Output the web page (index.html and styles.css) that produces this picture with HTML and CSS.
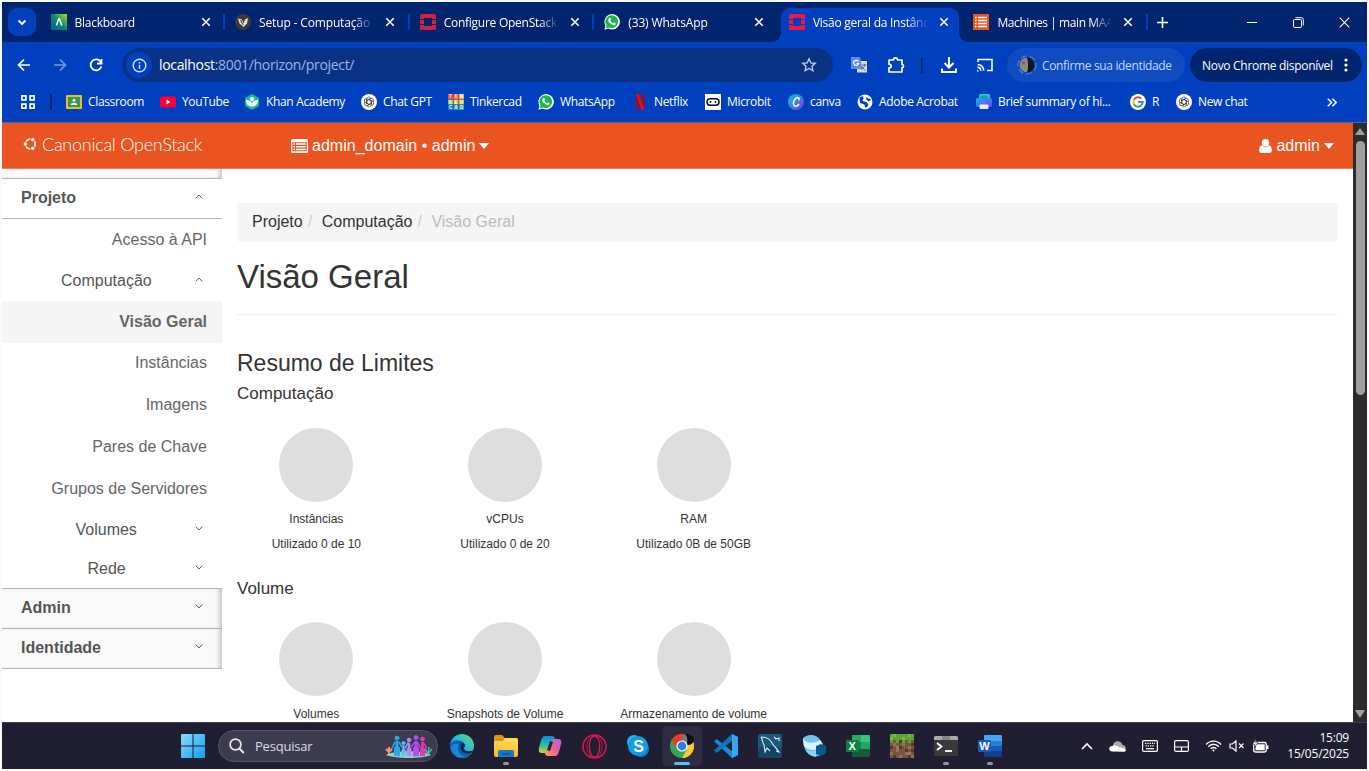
FILE: index.html
```html
<!DOCTYPE html>
<html lang="pt-BR">
<head>
<meta charset="utf-8">
<title>Visão geral da Instância</title>
<link rel="stylesheet" href="styles.css">
</head>
<body>
<svg width="0" height="0" class="defs">
  <defs>
    <symbol id="close" viewBox="0 0 10 10"><path d="M1.300 1.300l7.400 7.400M8.700 1.300L1.300 8.700" stroke="#fff" stroke-width="1.600" fill="none"/></symbol>
    <symbol id="openstack" viewBox="0 0 16 16"><path d="M1.500 0h13A1.500 1.500 0 0 1 16 1.500V5h-4V4H4v1H0V1.500A1.500 1.500 0 0 1 1.500 0zM0 6h4v4H0zM12 6h4v4h-4zM0 11h4v1h8v-1h4v3.500a1.500 1.500 0 0 1-1.500 1.500h-13A1.500 1.500 0 0 1 0 14.500z" fill="currentColor"/></symbol>
    <symbol id="whatsapp" viewBox="0 0 16 16"><path d="M.4 15.700l1.100-4A7.700 7.700 0 1 1 4.500 14.600z" fill="#fff"/><path d="M1.800 14.200l.8-2.800A6.400 6.400 0 1 1 5 13.400z" fill="#19b84a"/><path d="M5.200 4.200c.5-.5 1-.4 1.200.1l.5 1.200c.1.400-.1.600-.6 1.100.6 1.200 1.500 2 2.700 2.600.6-.7.700-.9 1.100-.7l1.300.6c.5.300.3 1.100-.2 1.600-1 .9-2.500.5-4.200-.6C5.300 9 4.200 7.200 4.300 5.900c0-.8.500-1.400.9-1.700z" fill="#fff"/></symbol>
    <symbol id="gpt" viewBox="0 0 16 16"><circle cx="8" cy="8" r="8" fill="#fff"/><g fill="none" stroke="#333" stroke-width=".7"><path id="petal" d="M5.700 9.300V5.100A2.300 2.300 0 0 1 10 4.200M5.700 6.800L9.300 4.700"/><use href="#petal" transform="rotate(60 8 8)"/><use href="#petal" transform="rotate(120 8 8)"/><use href="#petal" transform="rotate(180 8 8)"/><use href="#petal" transform="rotate(240 8 8)"/><use href="#petal" transform="rotate(300 8 8)"/></g></symbol>
    <symbol id="up" viewBox="0 0 8 5"><path d="M.7 4.300L4 1.100l3.300 3.200" fill="none" stroke="#555" stroke-width="1"/></symbol>
    <symbol id="down" viewBox="0 0 8 5"><path d="M.7.7L4 3.900 7.300.7" fill="none" stroke="#555" stroke-width="1"/></symbol>
    <linearGradient id="gBb" x1="0" y1="1" x2="1" y2="0"><stop offset="0" stop-color="#075aa3"/><stop offset=".5" stop-color="#078b70"/><stop offset="1" stop-color="#b7dc20"/></linearGradient>
    <linearGradient id="gCanva" x1="0" y1="0" x2="1" y2="1"><stop offset="0" stop-color="#08c5ce"/><stop offset=".5" stop-color="#3c83df"/><stop offset="1" stop-color="#842de6"/></linearGradient>
    <linearGradient id="gBrief" x1="0" y1="0" x2="1" y2="1"><stop offset="0" stop-color="#19b2dc"/><stop offset="1" stop-color="#7143ef"/></linearGradient>
    <linearGradient id="gWin" gradientUnits="userSpaceOnUse" x1="0" y1="0" x2="24" y2="24"><stop offset="0" stop-color="#82defd"/><stop offset="1" stop-color="#159cf0"/></linearGradient>
    <linearGradient id="gEdge" x1="0" y1="1" x2="1" y2="0"><stop offset="0" stop-color="#0962bc"/><stop offset=".55" stop-color="#28b7df"/><stop offset="1" stop-color="#63df58"/></linearGradient>
    <linearGradient id="gCoA" x1="0" y1="0" x2="0" y2="1"><stop offset="0" stop-color="#1684ee"/><stop offset=".55" stop-color="#28c39b"/><stop offset="1" stop-color="#f2c52a"/></linearGradient>
    <linearGradient id="gCoB" x1="1" y1="0" x2="0" y2="1"><stop offset="0" stop-color="#a867ee"/><stop offset=".5" stop-color="#f35d94"/><stop offset="1" stop-color="#ffac49"/></linearGradient>
    <linearGradient id="gFolder" x1="0" y1="0" x2="0" y2="1"><stop offset="0" stop-color="#ffdc5d"/><stop offset="1" stop-color="#f8b929"/></linearGradient>
  </defs>
</svg>

<div class="screen">
  <div class="tabstrip">
    <div class="tabsearch"><svg width="10" height="7" viewBox="0 0 10 7"><path d="M1.500 1.500L5 5l3.500-3.500" fill="none" stroke="#fff" stroke-width="1.900"/></svg></div>
    <div class="tabs">
      <div class="tab">
        <svg class="fav" viewBox="0 0 16 16"><rect width="16" height="16" fill="url(#gBb)"/><path d="M5.500 11.500L7.600 5h1L10.700 11.500" fill="none" stroke="#fff" stroke-width="1.600"/></svg>
        <span class="title">Blackboard</span><svg class="x"><use href="#close"/></svg>
      </div>
      <div class="tab">
        <svg class="fav" viewBox="0 0 16 16"><circle cx="8" cy="8" r="8" fill="#3a3a3a"/><path d="M3 4.500l4 1 1.500 4L10 5.500l3-1.500-1 5.500-3.500 3.500-4-3.500z" fill="#ddd"/><path d="M5.500 6l2.700 5" fill="none" stroke="#333" stroke-width="1"/></svg>
        <span class="title wide">Setup - Computação e</span><svg class="x"><use href="#close"/></svg>
      </div>
      <div class="tab">
        <svg class="fav os-dark"><use href="#openstack"/></svg>
        <span class="title">Configure OpenStack</span><svg class="x"><use href="#close"/></svg>
      </div>
      <div class="tab nosep">
        <svg class="fav"><use href="#whatsapp"/></svg>
        <span class="title wide">(33) WhatsApp</span><svg class="x"><use href="#close"/></svg>
      </div>
      <div class="tab active">
        <svg class="fav os-light"><use href="#openstack"/></svg>
        <span class="title">Visão geral da Instânc</span><svg class="x"><use href="#close"/></svg>
      </div>
      <div class="tab">
        <svg class="fav" viewBox="0 0 16 16"><rect width="16" height="16" fill="#e95420"/><path d="M2 3.500h1.500M5 3.500h9M2 6.500h1.500M5 6.500h9M2 9.500h1.500M5 9.500h9M2 12.500h1.500M5 12.500h9" stroke="#fff" stroke-width="1.300"/></svg>
        <span class="title maas">Machines | main MAA</span><svg class="x"><use href="#close"/></svg>
      </div>
    </div>
    <svg class="newtab" width="11" height="11" viewBox="0 0 11 11"><path d="M5.500 0v11M0 5.500h11" stroke="#fff" stroke-width="1.600"/></svg>
    <div class="winctl">
      <svg width="11" height="11" viewBox="0 0 11 11"><path d="M0 5.500h10" stroke="#fff"/></svg>
      <svg width="11" height="11" viewBox="0 0 11 11" fill="none" stroke="#fff"><rect x=".5" y="2.500" width="8" height="8" rx="1.300"/><path d="M2.500.7H8.300a2 2 0 0 1 2 2V8.500"/></svg>
      <svg width="11" height="11" viewBox="0 0 11 11"><path d="M.7.7l9.600 9.600M10.300.7L.7 10.300" stroke="#fff" stroke-width="1.100"/></svg>
    </div>
  </div>

  <div class="toolbar">
    <svg class="nav" viewBox="0 0 16 16"><path d="M14 8H3M8 2.500L2.500 8 8 13.500" fill="none" stroke="#fff" stroke-width="1.700"/></svg>
    <svg class="nav dim" viewBox="0 0 16 16"><path d="M2 8h11M8 2.500L13.500 8 8 13.500" fill="none" stroke="#fff" stroke-width="1.700"/></svg>
    <svg class="nav" viewBox="0 0 16 16"><path d="M13 5.300A5.500 5.500 0 1 0 13.400 9.500M13.500 2v4.500H9" fill="none" stroke="#fff" stroke-width="1.800"/></svg>
    <div class="omnibox">
      <span class="info"><svg width="15" height="15" viewBox="0 0 15 15"><circle cx="7.500" cy="7.500" r="6.300" fill="none" stroke="#d5e3ff" stroke-width="1.400"/><path d="M7.500 6.700v4M7.500 4v1.500" stroke="#d5e3ff" stroke-width="1.500"/></svg></span>
      <span class="url"><b>localhost</b>:8001/horizon/project/</span>
      <svg class="star" width="16" height="16" viewBox="0 0 16 16"><path d="M8 1.800l1.800 4.100 4.500.4-3.400 3 1 4.400L8 11.400l-3.900 2.300 1-4.400-3.400-3 4.500-.4z" fill="none" stroke="#c6d2ea" stroke-width="1.300"/></svg>
    </div>
    <svg class="ext" viewBox="0 0 16 16"><rect x="6" y="4" width="10" height="11.500" fill="#d8dee9"/><path d="M0 0h9l2.500 12H0z" fill="#5b8df0"/><path d="M7.300 4.600A2.500 2.500 0 1 0 7.500 6.500H5.500" fill="none" stroke="#fff" stroke-width="1.200"/><path d="M11 8h4.500M13.500 7v1c0 2-1.500 4-3 4.500M11 9.500c.7 2 2 3 3.500 4" fill="none" stroke="#59667c" stroke-width="1"/></svg>
    <svg class="puzzle" width="18" height="18" viewBox="0 0 18 18"><path d="M2 4h4.500c0-2.900 4-2.900 4 0H15v4.300c2 0 2 3.400 0 3.400V16H2v-4.200c3 0 3-3.600 0-3.600z" fill="none" stroke="#fff" stroke-width="1.700" stroke-linejoin="round"/></svg>
    <i class="divider"></i>
    <svg class="dl" width="18" height="18" viewBox="0 0 18 18"><path d="M9 1v10M4.500 7L9 11.500 13.500 7M2 12.500V16h14v-3.500" fill="none" stroke="#fff" stroke-width="2"/></svg>
    <svg class="cast" width="18" height="16" viewBox="0 0 18 16"><path d="M2 5V2.500h14V13.500h-5M1.500 7.500c4 .2 6 2.200 6.200 6.200M1.500 10.300c2 .1 3.200 1.300 3.400 3.400" fill="none" stroke="#fff" stroke-width="1.500"/><path d="M1 12.500l2 2H1z" fill="#fff"/></svg>
    <div class="profile"><svg width="20" height="20" viewBox="0 0 20 20"><circle cx="10" cy="10" r="9" fill="none" stroke="#4b80e6" stroke-width="1.200" stroke-dasharray="6 3"/><circle cx="10" cy="10" r="7.500" fill="#151515"/><path d="M10 2.500a7.500 7.500 0 0 0 0 15c1.500-4.500 1.500-10 0-15z" fill="#888"/><circle cx="6.500" cy="8" r="1.500" fill="#666"/></svg><span>Confirme sua identidade</span></div>
    <div class="update"><span>Novo Chrome disponível</span><svg width="4" height="14" viewBox="0 0 4 14"><circle cx="2" cy="2" r="1.600" fill="#fff"/><circle cx="2" cy="7" r="1.600" fill="#fff"/><circle cx="2" cy="12" r="1.600" fill="#fff"/></svg></div>
  </div>

  <div class="bookmarks">
    <div class="apps"><svg width="14" height="14" viewBox="0 0 14 14" fill="none" stroke="#fff" stroke-width="1.700"><rect x=".9" y=".9" width="4" height="4"/><rect x="9.100" y=".9" width="4" height="4"/><rect x=".9" y="9.100" width="4" height="4"/><rect x="9.100" y="9.100" width="4" height="4"/></svg><i class="divider"></i></div>
    <div class="bm"><svg viewBox="0 0 16 16"><rect y="1" width="16" height="14" rx="1" fill="#f4b92b"/><rect x="2" y="3" width="12" height="10" fill="#2f9a50"/><circle cx="8" cy="6.300" r="1.500" fill="#fff"/><path d="M4.700 11c0-3 6.600-3 6.600 0z" fill="#fff"/></svg><span>Classroom</span></div>
    <div class="bm"><svg viewBox="0 0 16 16"><rect y="2.500" width="16" height="11" rx="2.500" fill="#f03"/><path d="M6.500 5.500l4 2.500-4 2.500z" fill="#fff"/></svg><span>YouTube</span></div>
    <div class="bm"><svg viewBox="0 0 16 16"><path d="M8 0l7 4v8l-7 4-7-4V4z" fill="#14bf96"/><circle cx="8" cy="5" r="2" fill="#fff"/><path d="M2 6c4 0 6 2 6 4 0-2 2-4 6-4 0 4-2 6.500-6 6.500S2 10 2 6z" fill="#fff"/></svg><span>Khan Academy</span></div>
    <div class="bm"><svg><use href="#gpt"/></svg><span>Chat GPT</span></div>
    <div class="bm"><svg viewBox="0 0 16 16"><path fill="#ef4e3e" d="M0 0h5v5H0z"/><path fill="#f47a3c" d="M5.500 0h5v5h-5z"/><path fill="#f7a43c" d="M11 0h5v5h-5z"/><path fill="#86c440" d="M0 5.500h5v5H0z"/><path fill="#e9b22a" d="M5.500 5.500h5v5h-5z"/><path fill="#c6ba36" d="M11 5.500h5v5h-5z"/><path fill="#2276c9" d="M0 11h5v5H0z"/><path fill="#24a1cc" d="M5.500 11h5v5h-5z"/><path fill="#299ba6" d="M11 11h5v5h-5z"/><g fill="#fff" font-family="Liberation Sans" font-size="4.500" font-weight="700"><text x="1" y="4.200">T</text><text x="7.300" y="4.200">I</text><text x="11.900" y="4.200">N</text><text x="1" y="9.700">K</text><text x="6.400" y="9.700">E</text><text x="11.900" y="9.700">R</text><text x="1" y="15.200">C</text><text x="6.400" y="15.200">A</text><text x="11.900" y="15.200">D</text></g></svg><span>Tinkercad</span></div>
    <div class="bm"><svg><use href="#whatsapp"/></svg><span>WhatsApp</span></div>
    <div class="bm"><svg viewBox="0 0 16 16"><path d="M4 0h2.700v16L4 15.700zM9.700 0h2.600v16l-2.600-.3z" fill="#b20710"/><path d="M4 0h2.700l5.600 16H9.700z" fill="#f00b16"/></svg><span>Netflix</span></div>
    <div class="bm"><svg viewBox="0 0 16 16"><rect width="16" height="16" fill="#fff"/><rect x="2" y="4.800" width="12" height="6.400" rx="3.200" fill="none" stroke="#111" stroke-width="1.500"/><circle cx="5.500" cy="8" r=".9"/><circle cx="10.500" cy="8" r=".9"/></svg><span>Microbit</span></div>
    <div class="bm"><svg viewBox="0 0 16 16"><circle cx="8" cy="8" r="8" fill="url(#gCanva)"/><path d="M10.500 6.300c1.600-2.200-.2-3.600-2.400-2.200-2.600 1.600-3.500 6.200-1.900 7.700 1.300 1.200 3.600.1 4.800-1.800" fill="none" stroke="#fff" stroke-width="1.500"/></svg><span>canva</span></div>
    <div class="bm"><svg viewBox="0 0 16 16"><circle cx="8" cy="8" r="7.500" fill="#fff"/><path d="M2.500 3.500L6 2l.5 2.500-1 2.500 4 1 2 2.500-1.500 2.500-2 .5-.5-3-4.500-1.500z" fill="#0040be"/><path d="M9 3l2.500 1.500 3 1-3 2-2-2z" fill="#0040be"/></svg><span>Adobe Acrobat</span></div>
    <div class="bm"><svg viewBox="0 0 16 16"><rect x="3" width="11" height="5" rx="1.500" fill="#23cbd8"/><rect y="4" width="16" height="9" rx="2" fill="url(#gBrief)"/><rect x="4" y="1.500" width="8" height="3.500" rx="1" fill="#179fc0"/><rect x="3.500" y="10.500" width="9" height="4.500" rx="1" fill="#efe8ff"/></svg><span>Brief summary of hi...</span></div>
    <div class="bm"><svg viewBox="0 0 16 16"><circle cx="8" cy="8" r="8" fill="#fff"/><g fill="none" stroke-width="2"><path d="M11.300 4.600A4.700 4.700 0 0 0 3.900 5.700" stroke="#ea4335"/><path d="M3.900 5.700a4.700 4.700 0 0 0 0 4.600" stroke="#fbbc05"/><path d="M3.900 10.300A4.700 4.700 0 0 0 11 11.600" stroke="#34a853"/><path d="M11 11.600A4.700 4.700 0 0 0 12.700 8H8" stroke="#4285f4"/></g></svg><span>R</span></div>
    <div class="bm"><svg><use href="#gpt"/></svg><span>New chat</span></div>
    <svg class="more" width="10" height="9" viewBox="0 0 10 9"><path d="M.8.7l3.800 3.800L.8 8.300M5.300.7l3.800 3.800-3.800 3.800" fill="none" stroke="#fff" stroke-width="1.500"/></svg>
  </div>

  <div class="viewport">
    <div class="page">
      <header class="topbar">
        <div class="brand"><svg width="14" height="14" viewBox="0 0 14 14"><circle cx="7.300" cy="7" r="4.900" fill="none" stroke="#fff" stroke-width="1.800"/><g fill="#fff" stroke="#e95420" stroke-width="1"><circle cx="2.300" cy="7" r="2.200"/><circle cx="9.800" cy="2.700" r="2.200"/><circle cx="9.800" cy="11.300" r="2.200"/></g></svg><span>Canonical OpenStack</span></div>
        <div class="context"><svg width="17" height="14" viewBox="0 0 17 14"><path d="M1.500 0h14A1.500 1.500 0 0 1 17 1.500v11a1.500 1.500 0 0 1-1.500 1.500h-14A1.500 1.500 0 0 1 0 12.500v-11A1.500 1.500 0 0 1 1.500 0zM1.300 3.300v9h14.400v-9z" fill="#fff" fill-rule="evenodd"/><path d="M2.500 5h1.500M5 5h9.500M2.500 7.700h1.500M5 7.700h9.500M2.500 10.400h1.500M5 10.400h9.500" stroke="#fff" stroke-width="1.500"/></svg><span>admin_domain • admin</span><i class="caret"></i></div>
        <div class="user"><svg width="13" height="14" viewBox="0 0 13 14"><circle cx="6.500" cy="3.700" r="3.700" fill="#fff"/><path d="M3 6.300c2 2.200 5 2.200 7 0 2 .4 2.800 2.300 2.800 5.200A2.300 2.300 0 0 1 10.500 14h-8A2.300 2.300 0 0 1 .2 11.500C.2 8.600 1 6.700 3 6.300z" fill="#fff"/></svg><span>admin</span><i class="caret"></i></div>
      </header>
      <div class="body">
        <nav class="sidebar">
          <div class="stub"></div>
          <div class="group open"><span>Projeto</span><svg class="chev"><use href="#up"/></svg></div>
          <div class="item h41">Acesso à API</div>
          <div class="sub h41"><span class="comp">Computação</span><svg class="chev"><use href="#up"/></svg></div>
          <div class="item selected">Visão Geral</div>
          <div class="item h41 inst">Instâncias</div>
          <div class="item">Imagens</div>
          <div class="item">Pares de Chave</div>
          <div class="item">Grupos de Servidores</div>
          <div class="sub h39"><span class="vol">Volumes</span><svg class="chev"><use href="#down"/></svg></div>
          <div class="sub h39"><span class="rede">Rede</span><svg class="chev"><use href="#down"/></svg></div>
          <div class="group"><span>Admin</span><svg class="chev"><use href="#down"/></svg></div>
          <div class="group last"><span>Identidade</span><svg class="chev"><use href="#down"/></svg></div>
        </nav>
        <main class="content">
          <div class="crumbs"><span>Projeto</span><i>/</i><span>Computação</span><i>/</i><em>Visão Geral</em></div>
          <h1>Visão Geral</h1>
          <h2>Resumo de Limites</h2>
          <h3>Computação</h3>
          <div class="quotas">
            <div class="quota"><div class="pie"></div><p>Instâncias</p><p>Utilizado 0 de 10</p></div>
            <div class="quota"><div class="pie"></div><p>vCPUs</p><p>Utilizado 0 de 20</p></div>
            <div class="quota"><div class="pie"></div><p>RAM</p><p>Utilizado 0B de 50GB</p></div>
          </div>
          <h3>Volume</h3>
          <div class="quotas volume">
            <div class="quota"><div class="pie"></div><p>Volumes</p></div>
            <div class="quota"><div class="pie"></div><p>Snapshots de Volume</p></div>
            <div class="quota"><div class="pie"></div><p>Armazenamento de volume</p></div>
          </div>
        </main>
      </div>
    </div>
    <div class="scrollbar">
      <svg width="10" height="7" viewBox="0 0 10 7"><path d="M5 0l4.500 6a.6.600 0 0 1-.5 1H1a.6.600 0 0 1-.5-1z" fill="#9f9f9f"/></svg>
      <div class="thumb"></div>
      <svg class="sdown" width="10" height="8" viewBox="0 0 10 8"><path d="M5 8L.5 1A.6.600 0 0 1 1 0h8a.6.600 0 0 1 .5 1z" fill="#9f9f9f"/></svg>
    </div>
  </div>

  <div class="taskbar">
    <div class="task win"><svg width="24" height="24" viewBox="0 0 24 24" fill="url(#gWin)"><path d="M1 0h10.500v11.500H0V1a1 1 0 0 1 1-1zM12.500 0H23a1 1 0 0 1 1 1v10.500H12.500zM0 12.500h11.500V24H1a1 1 0 0 1-1-1zM12.500 12.500H24V23a1 1 0 0 1-1 1H12.500z"/></svg></div>
    <div class="search"><svg width="16" height="16" viewBox="0 0 16 16"><circle cx="6.500" cy="6.500" r="5.400" fill="none" stroke="#e8e8ee" stroke-width="1.700"/><path d="M10.500 10.500l4.300 4.500" stroke="#e8e8ee" stroke-width="1.900"/></svg><span>Pesquisar</span>
      <svg class="people" width="48" height="24" viewBox="0 0 48 24"><path d="M1 21c8-5 38-5 45 0-8 4-36 4-45 0z" fill="#8fd6be"/><g stroke-linecap="round"><g fill="#2ba6ed" stroke="#2ba6ed"><circle cx="12" cy="4" r="2"/><path d="M12 8v6M10.500 14v7M13.500 14v7" stroke-width="3"/><path d="M10 8l-3 6M14 8l3 5" stroke-width="1.600"/></g><g fill="#53c4f4" stroke="#53c4f4"><circle cx="18.500" cy="9" r="1.500"/><path d="M18.500 12v4M17.500 16v5M19.500 16v5" stroke-width="2"/></g><g fill="#aa8cf5" stroke="#aa8cf5"><circle cx="24" cy="6" r="1.800"/><path d="M24 10v5M22.800 15v6M25.200 15v6" stroke-width="2.500"/><path d="M23 9l-3 5" stroke-width="1.500"/></g><g fill="#b44cef" stroke="#b44cef"><circle cx="31" cy="3.500" r="2"/><path d="M31 8v6M29.500 14v7M32.500 14v7" stroke-width="3"/><path d="M30 8l-4 5M32 8l3 5" stroke-width="1.500"/></g><g fill="#e337ae" stroke="#e337ae"><circle cx="37.500" cy="5" r="1.900"/><path d="M37.500 9v6M36.200 15v6M38.800 15v6" stroke-width="2.700"/><path d="M38.500 9l3 5" stroke-width="1.500"/></g></g><path d="M4 20v-7M4 18l-3-3M4 18l3-3" stroke="#f0936b" stroke-width="2.200"/><path d="M43 21l1-8M43 20l4-5M43 20l-3-5" stroke="#4eb79f" stroke-width="1.500"/></svg>
    </div>
    <div class="task edge"><svg width="24" height="24" viewBox="0 0 24 24"><circle cx="12" cy="12" r="12" fill="url(#gEdge)"/><path d="M0 12C1 5 13 5 15 11c.3 1.400-.8 2.500-1.500 3.500C15 18 20 18 23 16.500 20 23 12 26 6 22.500 2 20 0 16 0 12z" fill="#0c5caf"/><path d="M9 11c-3 4 0 10 7 12-8 3-15-3-15-10 2-4 6-4 8-2z" fill="#1688d6"/><path d="M11.500 9.500c4-1 4 3 2 5 2 3.500 7 3 9.500 2l-1 2c-7 3-14-2-10.500-9z" fill="#1b2034"/></svg></div>
    <div class="task run"><svg width="24" height="22" viewBox="0 0 24 22"><path d="M0 2a2 2 0 0 1 2-2h6l3 3h11a2 2 0 0 1 2 2v4H0z" fill="#dc9514"/><path d="M0 6h9l2-3h11a2 2 0 0 1 2 2v15a2 2 0 0 1-2 2H2a2 2 0 0 1-2-2z" fill="url(#gFolder)"/><path d="M4 22v-5a2 2 0 0 1 2-2h12a2 2 0 0 1 2 2v5z" fill="#147ac7"/><path d="M8 19h8" stroke="#0b559b" stroke-width="1.500"/></svg></div>
    <div class="task"><svg width="24" height="24" viewBox="0 0 24 24"><path d="M6 2h8c2 0 2.500 1 3 3l1 2c-5-1-5 4-6 8-1 3-3 4-5 4H4c-5 0-3-5-2-9S4 3 6 2z" fill="url(#gCoA)"/><path d="M18 22h-8c-2 0-3-1-3-3l-1-2c5 1 5-4 6-8 1-3 3-4 5-4h3c5 0 3 5 2 9s-2 7-4 8z" fill="url(#gCoB)"/><path d="M12 7l3 1-3 9-3-1z" fill="#25233d"/></svg></div>
    <div class="task"><svg width="25" height="25" viewBox="0 0 25 25" fill="none" stroke="#d91851"><circle cx="12.500" cy="12.500" r="11.500" stroke-width="1.500"/><ellipse cx="12.500" cy="12.500" rx="5.200" ry="10.500" stroke-width="1.300"/><ellipse cx="12.500" cy="12.500" rx="7.700" ry="11" stroke-width=".8"/></svg></div>
    <div class="task"><svg width="24" height="24" viewBox="0 0 24 24"><circle cx="8" cy="8" r="7" fill="#23b8f2"/><circle cx="15" cy="15" r="8" fill="#087bcd"/><circle cx="12" cy="12" r="10" fill="#109ee3"/><text x="7.200" y="18" font-family="Liberation Sans" font-size="16" font-weight="700" fill="#fff">S</text></svg></div>
    <div class="task current"><svg width="24" height="24" viewBox="0 0 24 24"><circle cx="12" cy="12" r="12" fill="#34a853"/><path d="M1.600 6A12 12 0 0 1 22.400 6H12L7 15z" fill="#e33b2e"/><path d="M22.400 6A12 12 0 0 1 12 24l5-9-5-9z" fill="#fcc934"/><path d="M14 0a7 7 0 0 0 2 11c3-3 2-8-2-11z" fill="#777"/><path d="M15 0c3 3 3 8 1 11 4 1 8-2 8-5.500S20 0 15 0z" fill="#111"/><circle cx="12" cy="12" r="5.600" fill="#fff"/><circle cx="12" cy="12" r="4.400" fill="#287de9"/></svg></div>
    <div class="task"><svg width="25" height="24" viewBox="0 0 25 24"><path d="M18 0l6 3v18l-6 3L2 9l-2-1.500L2.500 5 18 17z" fill="#168bd8"/><path d="M18 0l6 3v18l-6 3z" fill="#35a6ef"/><path d="M18 7v-7L0 16.500 2.500 19z" fill="#0b73bb"/><path d="M18 7v10l-6-5z" fill="#201f36"/></svg></div>
    <div class="task"><svg width="24" height="24" viewBox="0 0 24 24"><rect width="24" height="24" rx="2" fill="#1a587a"/><path d="M0 15c9-4 17-4 24 0v7a2 2 0 0 1-2 2H2a2 2 0 0 1-2-2z" fill="#164463"/><path d="M3 3c6 0 9 2 11 6 2 4 5 5 7 9l-3-1M3 3c2 3 1 5 3 8l1 7 2-4 3 3M16 3l2 2 3-1v3" fill="none" stroke="#d9edf5" stroke-width="1.100"/></svg></div>
    <div class="task"><svg width="24" height="24" viewBox="0 0 24 24"><path d="M1 4C6-1 15 1 19 7s3 12-2 15C9 24 0 17 1 4z" fill="#4eb9e9"/><path d="M1 4c3 6 12 5 17 2 2 2 3 5 3 7-8 4-15 4-19-1z" fill="#d9f3fb"/><path d="M2 4C7-1 15 1 18 6c-5 3-14 4-16-2z" fill="#6dc5ee"/><path d="M3 14c5 4 8 3 12 2l-1 7C8 22 4 19 3 14z" fill="#86d4f5"/><path d="M14 12l5-2 5 2v7l-5 3-5-2z" fill="#075b91"/></svg></div>
    <div class="task"><svg width="24" height="22" viewBox="0 0 24 22"><path fill="#2ba766" d="M6 0h9v7H6z"/><path fill="#36c681" d="M15 0h8a1 1 0 0 1 1 1v6h-9z"/><path fill="#18814c" d="M6 7h9v7H6z"/><path fill="#20a765" d="M15 7h9v7h-9z"/><path fill="#165c38" d="M6 14h18v7a1 1 0 0 1-1 1H7a1 1 0 0 1-1-1z"/><rect y="5" width="13" height="12" rx="1" fill="#107c41"/><text x="2.500" y="14.800" font-family="Liberation Sans" font-size="11" font-weight="700" fill="#fff">X</text></svg></div>
    <div class="task"><svg width="24" height="24" viewBox="0 0 8 8" shape-rendering="crispEdges"><path fill="#79553b" d="M0 0h8v8H0z"/><path fill="#5ba335" d="M0 0h8v2H7v1H6V2H5v1H4V2H3v1H2V2H1v1H0z"/><path fill="#76bb45" d="M1 0h1v1H1zM4 1h1v1H4zM6 0h1v1H6zM0 1h1v1H0z"/><path fill="#9a7352" d="M1 3h1v1H1zM4 3h1v1H4zM6 4h1v1H6zM2 5h1v1H2zM0 6h1v1H0zM5 6h1v1H5zM3 7h1v1H3zM7 7h1v1H7z"/><path fill="#52392a" d="M3 4h1v1H3zM0 4h1v1H0zM7 3h1v1H7zM5 5h1v1H5zM1 7h1v1H1zM6 7h1v1H6zM3 2h1v1H3zM7 5h1v1H7z"/><path fill="#8a8078" d="M2 4h1v1H2zM6 6h1v1H6z"/></svg></div>
    <div class="task run"><svg width="24" height="20" viewBox="0 0 24 20"><rect width="24" height="20" rx="1.500" fill="#393939"/><path d="M1.500 0h21A1.500 1.500 0 0 1 24 1.500V4H0V1.500A1.500 1.500 0 0 1 1.500 0z" fill="#aaa"/><path d="M8 0h8v4H8z" fill="#858585"/><path d="M3 7l4.500 3.500L3 14" fill="none" stroke="#fff" stroke-width="1.800"/><path d="M11 15h7" stroke="#fff" stroke-width="1.800"/></svg></div>
    <div class="task run"><svg width="24" height="22" viewBox="0 0 24 22"><path fill="#43a6ee" d="M6 1a1 1 0 0 1 1-1h16a1 1 0 0 1 1 1v5H6z"/><path fill="#2b7cd5" d="M6 6h18v5H6z"/><path fill="#175cb6" d="M6 11h18v5H6z"/><path fill="#123f89" d="M6 16h18v5a1 1 0 0 1-1 1H7a1 1 0 0 1-1-1z"/><rect y="5" width="13" height="12" rx="1" fill="#185abd"/><text x="1.200" y="14.800" font-family="Liberation Sans" font-size="11" font-weight="700" fill="#fff">W</text></svg></div>
    <div class="tray">
      <svg width="12" height="8" viewBox="0 0 12 8"><path d="M1 7l5-5 5 5" fill="none" stroke="#fff" stroke-width="1.700"/></svg>
      <svg width="17" height="11" viewBox="0 0 17 11"><path d="M4 5C4-.5 12-1.500 13.500 4 16 4 17 6 16.500 8L10 10 4 8z" fill="#aaa"/><path d="M3.500 10.500C-1 10.500-.7 5 3.300 5c2-1 3-1 5 .3l5 1.700c5 0 4 4 1.200 3.800z" fill="#fff"/></svg>
      <svg width="16" height="12" viewBox="0 0 16 12" fill="none" stroke="#fff"><rect x=".6" y=".6" width="14.800" height="10.800" rx="1.200" stroke-width="1.200"/><path d="M3 3.300h10M3.500 5.800h9" stroke-dasharray="1.300 1" stroke-width="1.200"/><path d="M4 8.700h8" stroke-width="1.200"/></svg>
      <svg width="15" height="12" viewBox="0 0 15 12" fill="none" stroke="#fff" stroke-width="1.200"><rect x=".6" y=".6" width="13.800" height="10.800" rx="1.500"/><path d="M.6 7h13.800M7.500 7v4.500"/></svg>
      <svg class="wifi" width="17" height="12" viewBox="0 0 17 12" fill="none" stroke="#fff" stroke-width="1.400"><path d="M1 4.500c4-4.500 11-4.500 15 0M3.300 6.700c3-3.200 7.400-3.200 10.400 0M5.600 8.800c1.700-1.800 4.100-1.800 5.800 0"/><circle cx="8.500" cy="10.500" r="1" fill="#fff" stroke="none"/></svg>
      <svg class="vol-ic" width="16" height="12" viewBox="0 0 16 12" fill="none" stroke="#fff" stroke-width="1.200"><path d="M1 4h2.500L7 .9v10.200L3.500 8H1zM10 3.500l4.500 4.500M14.500 3.500L10 8"/></svg>
      <svg class="bat" width="17" height="14" viewBox="0 0 17 14"><rect x="1.700" y="3.500" width="12.600" height="9.500" rx="1.800" fill="none" stroke="#fff" stroke-width="1.300"/><path d="M4 5.300h8.700v5.900H3.300zM15 6.500h1.500v3.500H15z" fill="#fff"/><path d="M4 0L.5 5.500H3L2 9l4-5.500H3.500z" fill="#fff" stroke="#1f1e33" stroke-width=".5"/></svg>
      <div class="clock"><span>15:09</span><span>15/05/2025</span></div>
    </div>
  </div>
</div>
</body>
</html>
```

FILE: styles.css
```css
* { box-sizing: border-box; }
body { margin: 0; background: #fafafa; overflow: hidden; font-family: "Liberation Sans", Arial, sans-serif; }
svg { display: block; flex: none; }
.defs { position: absolute; }
.screen { width: 1365px; height: 767px; margin: 2px; display: flex; flex-direction: column; background: #fff; }
.tabstrip, .toolbar, .bookmarks, .taskbar { font-family: "Open Sans", "Noto Sans", sans-serif; font-size: 12px; color: #fff; white-space: nowrap; }

/* tab strip */
.tabstrip { height: 40px; flex: none; background: #00246d; display: flex; padding-top: 6px; }
.tabsearch { width: 28px; height: 28px; margin-left: 6px; border-radius: 9px; background: #0040be; display: flex; align-items: center; justify-content: center; }
.tabs { display: flex; gap: 6.600px; margin-left: 6.500px; }
.tab { position: relative; width: 178px; height: 34px; padding: 0 10px 6px 8px; display: flex; align-items: center; }
.tab::after { content: ""; position: absolute; right: -4.500px; top: 6px; width: 2px; height: 16px; background: #0040be; }
.tab.nosep::after, .tab.active::after { display: none; }
.tab.active { background: #0040be; border-radius: 9px 9px 0 0; }
.tab.active::before { content: ""; position: absolute; left: -9px; right: -9px; bottom: 0; height: 9px; background: radial-gradient(circle at 0 0, transparent 8.500px, #0040be 9px) left / 9px 9px no-repeat, radial-gradient(circle at 100% 0, transparent 8.500px, #0040be 9px) right / 9px 9px no-repeat; }
.fav { width: 16px; height: 16px; }
.os-dark { color: #cf2140; }
.os-light { color: #ed1944; }
.title { width: 120px; margin-left: 8px; letter-spacing: -.26px; -webkit-mask-image: linear-gradient(90deg, #000 95px, transparent 115px); mask-image: linear-gradient(90deg, #000 95px, transparent 115px); }
.title.wide { letter-spacing: -.15px; }
.title.maas { letter-spacing: -.42px; }
.x { width: 10px; height: 10px; margin-left: auto; }
.newtab { margin: 9px 0 0 14px; }
.winctl { margin: 9px 17px 0 auto; display: flex; gap: 35px; }

/* toolbar */
.toolbar { height: 46px; flex: none; background: #0040be; display: flex; align-items: center; }
.nav { width: 16px; height: 16px; margin-left: 20px; }
.nav:first-child { margin-left: 14px; }
.dim { opacity: .45; }
.omnibox { width: 711px; height: 34px; margin-left: 18px; border-radius: 17px; background: #0a3284; display: flex; align-items: center; padding: 0 16px 0 4px; }
.info { width: 26px; height: 26px; border-radius: 13px; background: #0040be; display: flex; align-items: center; justify-content: center; }
.url { margin-left: 7px; font-size: 14px; letter-spacing: -.33px; padding-bottom: 1px; color: #9fb4e0; }
.url b { font-weight: 400; color: #fff; }
.star { margin-left: auto; }
.ext { width: 16px; height: 16px; margin-left: 18px; }
.puzzle { margin-left: 20px; }
.divider { width: 2px; height: 16px; background: #00246d; }
.toolbar .divider { margin-left: 16px; }
.dl { margin-left: 17px; }
.cast { margin-left: 18px; }
.profile { width: 178px; height: 34px; margin-left: 13px; border-radius: 17px; background: #104bc0; display: flex; align-items: center; padding-left: 10px; gap: 5px; color: #c4d7ff; letter-spacing: -.35px; }
.update { width: 172px; height: 34px; margin-left: 5px; border-radius: 17px; background: #00246d; display: flex; align-items: center; padding: 0 14px 0 12px; justify-content: space-between; letter-spacing: -.3px; }

/* bookmarks */
.bookmarks { height: 35px; flex: none; background: #0040be; border-bottom: 1px solid #4566a7; display: grid; grid-template-columns: 64px 94px 84px 117px 87px 90px 94px 73px 83px 69px 119px 154px 46px 151px 16px; align-items: center; padding-bottom: 6px; }
.apps { display: flex; align-items: center; padding-left: 19px; gap: 15px; }
.bm { display: flex; align-items: center; gap: 6px; letter-spacing: -.34px; }
.bm span { padding-bottom: 1px; }
.bm svg { width: 16px; height: 16px; }

/* page */
.viewport { height: 599px; flex: none; display: flex; overflow: hidden; }
.page { width: 1351px; height: 599px; overflow: hidden; background: #fff; }
.topbar { height: 46px; background: #e95420; display: flex; align-items: center; color: #fff; font-size: 16px; border-bottom: 1px solid #ee7d55; }
.brand { width: 289px; padding: 0 0 3px 21px; display: flex; align-items: center; gap: 5px; font-family: Lato, sans-serif; font-weight: 300; font-size: 18px; letter-spacing: -.26px; white-space: nowrap; }
.context, .user { display: flex; align-items: center; gap: 4px; }
.context span { letter-spacing: .02px; }
.user { margin-left: auto; padding-right: 19px; }
.caret { width: 0; height: 0; border: 5px solid transparent; border-top: 6px solid #fff; border-bottom: 0; }
.body { display: flex; }
.sidebar { width: 220px; flex: none; color: #666; font-size: 16px; }
.stub { height: 9px; background: #f9f9f9; box-shadow: inset -5px 0 5px -3px #bbb; }
.group { height: 40px; border-top: 1px solid #b5b5b5; background: #f9f9f9; box-shadow: inset -5px 0 5px -3px #bbb; display: flex; align-items: center; justify-content: space-between; padding: 0 19px 1px; font-weight: 700; color: #555; }
.group.open { height: 41px; background: #fff; box-shadow: none; border-bottom: 1px solid #b5b5b5; padding-bottom: 1px; }
.group.last { height: 41px; border-bottom: 1px solid #b5b5b5; padding-bottom: 2px; }
.chev { width: 8px; height: 5px; margin-bottom: 3px; }
.item { height: 42px; display: flex; align-items: center; justify-content: flex-end; padding-right: 15px; }
.item.selected { background: #f5f5f5; font-weight: 700; }
.h41 { height: 41px; }
.h39 { height: 39px; }
.inst { padding-bottom: 1px; }
.sub { display: flex; align-items: center; justify-content: space-between; padding-right: 19px; color: #555; }
.comp { padding-left: 59px; }
.vol { padding-left: 73.500px; }
.rede { padding-left: 85.500px; }
.content { flex: 1; padding: 34px 15px 0; color: #333; }
.crumbs { height: 39px; background: #f5f5f5; border-radius: 4px; display: flex; align-items: center; padding: 0 15px 2px; font-size: 16px; }
.crumbs i { width: 19px; padding-left: 5px; font-style: normal; color: #ccc; }
.crumbs em { font-style: normal; color: #bbb; }
h1, h2, h3, p { margin: 0; font-weight: 400; }
h1 { font-size: 33px; line-height: 40px; height: 73px; padding-top: 15px; border-bottom: 1px solid #eee; }
h2 { font-size: 23px; line-height: 28px; margin-top: 34px; }
h3 { font-size: 17px; line-height: 20px; margin-top: 7px; }
.quotas { display: flex; width: 566px; height: 145px; margin-top: 23px; margin-left: -15px; }
.quota { flex: 1; padding-top: 1px; display: flex; flex-direction: column; align-items: center; font-size: 12px; line-height: 15px; white-space: nowrap; }
.pie { width: 74px; height: 74px; border-radius: 50%; background: #ddd; }
.quota p { margin-top: 10px; }
.volume { margin-top: 22px; }
.volume .pie { margin-bottom: 1px; }

/* page scrollbar */
.scrollbar { width: 14px; background: #2b2b2b; display: flex; flex-direction: column; align-items: center; padding: 5px 0 4px; }
.thumb { width: 9px; height: 254px; margin-top: 6px; border-radius: 5px; background: #9f9f9f; }
.sdown { margin-top: auto; }

/* taskbar */
.taskbar { height: 47px; flex: none; background: #1f1e33; border-top: 1px solid #41404e; display: flex; align-items: center; }
.task { position: relative; width: 40px; height: 40px; margin-right: 4px; border-radius: 5px; display: flex; align-items: center; justify-content: center; }
.win { margin-left: 171px; margin-right: 5px; }
.edge { margin-left: 4px; }
.search { width: 220px; height: 32px; border: 1px solid #55546a; border-radius: 16px; background: #3c3b4f; display: flex; align-items: center; padding: 0 4px 0 10px; font-size: 13px; color: #dcdce4; }
.search span { margin-left: 10px; letter-spacing: -.2px; }
.people { margin-left: auto; }
.current { background: #2d2c42; }
.run::after, .current::after { content: ""; position: absolute; left: 17px; bottom: 1px; width: 6px; height: 3px; border-radius: 2px; background: #9897a6; }
.current::after { left: 12px; width: 16px; background: #5fb9f3; }
.tray { margin-left: auto; margin-right: 18px; display: flex; align-items: center; }
.tray svg { margin-right: 16px; }
.tray .wifi { margin-right: 7px; }
.tray .vol-ic { margin-right: 7px; }
.tray .bat { margin-right: 0; }
.clock { width: 80px; display: flex; flex-direction: column; align-items: flex-end; line-height: 16px; letter-spacing: -.2px; }
```
